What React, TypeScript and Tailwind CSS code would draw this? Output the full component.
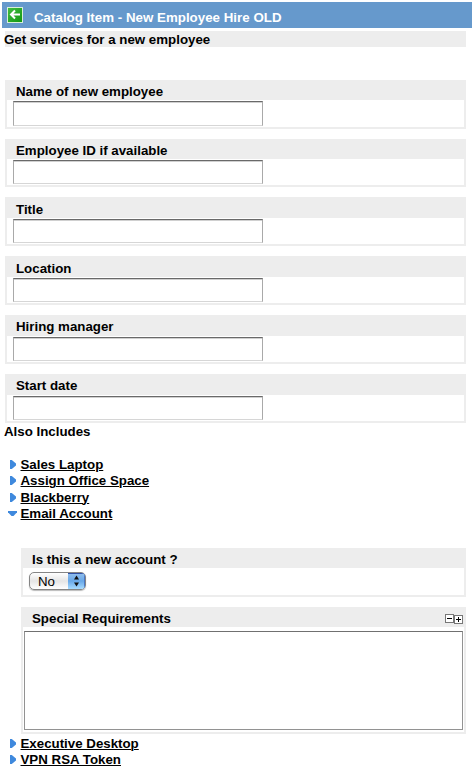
import type { ReactNode } from "react";

const fields = [
  { label: "Name of new employee", box: "h-[49px]", head: "h-5", input: "h-[25px]" },
  { label: "Employee ID if available", box: "h-[48px] mt-[10px]", head: "h-5", input: "h-6" },
  { label: "Title", box: "h-[49px] mt-[10px]", head: "h-[21px] pt-[5px]", input: "h-6" },
  { label: "Location", box: "h-[49px] mt-[10px]", head: "h-[21px] pt-[5px]", input: "h-6" },
  { label: "Hiring manager", box: "h-[49px] mt-[10px]", head: "h-[21px]", input: "h-6" },
  { label: "Start date", box: "h-[49px] mt-[10px]", head: "h-[21px]", input: "h-6" },
];

function Panel({ label, box, head, children, extra }: { label: string; box: string; head: string; children: ReactNode; extra?: ReactNode }) {
  return (
    <section className={`border-x-2 border-b-2 border-[#ededed] ${box}`}>
      <div className={`flex items-start justify-between bg-[#ededed] pl-[9px] pt-1 ${head}`}>
        <span>{label}</span>
        {extra}
      </div>
      {children}
    </section>
  );
}

function Entry({ label, open = false }: { label: string; open?: boolean }) {
  return (
    <div className="flex h-[16.4px] items-start">
      <svg className="ml-[8px] mr-[3px] shrink-0" width="10" height="16" viewBox="0 0 10 16">
        {open ? <path d="M0 6H9V7.2L5.5 11H3.5L0 7.2Z" fill="#3f89dd" /> : <path d="M2 4H3.8L8 7.6V9.4L3.8 13H2Z" fill="#3f89dd" />}
      </svg>
      <a className="mt-px -ml-[0.5px] underline decoration-1 underline-offset-1">{label}</a>
    </div>
  );
}

export default function App() {
  return (
    <main className="h-[775px] w-[472px] overflow-hidden bg-white pl-[2px] pt-[2px] font-['Liberation_Sans',Arial,sans-serif] text-[13.3px] font-bold leading-4 text-black">
      <header className="flex h-[26px] items-start bg-[#6699cc] text-white">
        <svg className="ml-[5px] mt-[5px]" width="16" height="16" viewBox="0 0 16 16">
          <defs>
            <linearGradient id="green" x1="0" y1="0" x2="1" y2="1">
              <stop stopColor="#43bd43" />
              <stop offset="1" stopColor="#109610" />
            </linearGradient>
          </defs>
          <rect x=".5" y=".5" width="15" height="15" fill="url(#green)" stroke="#d9efd8" />
          <path d="M8 3.5L4 7.5L8 11.5M4 7.5H13" fill="none" stroke="white" strokeWidth="2" />
        </svg>
        <h1 className="ml-[11px] mt-2 tracking-[0.02px]">Catalog Item - New Employee Hire OLD</h1>
      </header>
      <div className="ml-[3px] mt-[3px] h-4 w-[461px] bg-[#ededed]">
        <p className="-ml-px pt-px">Get services for a new employee</p>
      </div>
      <div className="ml-[3px] mt-[33px] w-[461px]">
        {fields.map((f) => (
          <Panel key={f.label} label={f.label} box={f.box} head={f.head}>
            <input aria-label={f.label} className={`ml-[6px] mt-px block w-[250px] border border-t-[#696969] border-r-[#a9a9a9] border-b-[#d6d6d6] border-l-[#a9a9a9] bg-white shadow-[inset_0_1px_0_#d0d0d0] outline-none ${f.input}`} />
          </Panel>
        ))}
      </div>
      <h2 className="ml-[2px] mt-px">Also Includes</h2>
      <div className="mt-4 h-[66px] -ml-[2px]">
        <Entry label="Sales Laptop" />
        <Entry label="Assign Office Space" />
        <Entry label="Blackberry" />
        <Entry label="Email Account" open />
      </div>
      <div className="ml-[19px] mt-[26px] w-[445px]">
        <Panel label="Is this a new account ?" box="h-[49px]" head="h-5">
          <button className="ml-[6px] mt-[4px] flex h-[18px] w-[57px] overflow-hidden rounded-[5px] border border-[#858585] bg-linear-to-b from-white via-[#e5e5e5] to-white text-[13.3px] font-normal leading-[18px] shadow-[0_1px_1px_#bbb]">
            <span className="w-[38px] pl-[8px] text-left">No</span>
            <span className="flex-1 bg-linear-to-b from-[#93bfed] via-[#68a8e8] to-[#a8dcff] shadow-[inset_-1px_0_0_#4b78c4,inset_0_1px_0_#3151a5]">
              <svg width="17" height="16" viewBox="0 0 17 16"><path d="M6 6.5L8.5 2.5L11 6.5ZM6 9.5H11L8.5 13.5Z" fill="#111" /></svg>
            </span>
          </button>
        </Panel>
        <Panel
          label="Special Requirements"
          box="mt-[10px] h-[127px]"
          head="h-5"
          extra={
            <svg className="mr-px mt-[3px]" width="18" height="10" viewBox="0 0 18 10">
              <g fill="white" stroke="#777"><rect x=".5" y=".5" width="8" height="8" /><rect x="9.5" y="1.5" width="8" height="8" /></g>
              <path d="M2 4.5H7M11 5.5H16M13.5 3V8" stroke="black" />
            </svg>
          }
        >
          <textarea aria-label="Special Requirements" className="ml-px mt-[4px] block h-[99px] w-[439px] resize-none border border-[#929292] border-t-[#707070] bg-white outline-none" />
        </Panel>
      </div>
      <div className="mt-px -ml-[2px]">
        <Entry label="Executive Desktop" />
        <Entry label="VPN RSA Token" />
      </div>
    </main>
  );
}
